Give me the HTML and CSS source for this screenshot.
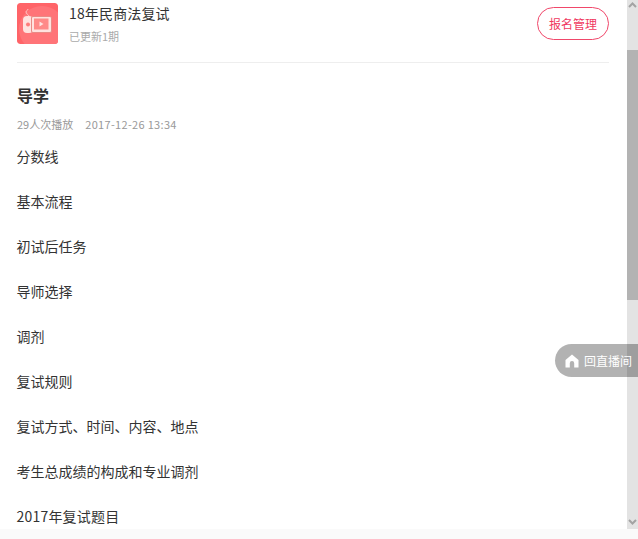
FILE: index.html
```html
<!DOCTYPE html>
<html lang="zh-CN">
<head>
<meta charset="utf-8">
<title>导学</title>
<link rel="stylesheet" href="styles.css">
</head>
<body>
<div class="window">
  <main class="content">
    <header class="course">
      <div class="cover">
        <svg viewBox="0 0 41 41" width="41" height="41" aria-hidden="true">
          <rect width="41" height="41" rx="3" fill="#ff6468"/>
          <circle cx="25" cy="26" r="23" fill="#ff7478"/>
          <path d="M12 13c-1-2-3-2-3-4s2-1 2-3" fill="none" stroke="#ffc4c2" stroke-width="1"/>
          <rect x="6" y="13" width="10" height="17" rx="4" fill="#ffe2df"/>
          <circle cx="11" cy="21.5" r="2" fill="#ff7b7b"/>
          <rect x="14.5" y="13.5" width="20" height="16" rx="1.5" fill="#ffe2df" stroke="#e98a85" stroke-width="1"/>
          <rect x="17" y="15.5" width="14.5" height="11" fill="#ff8a88"/>
          <path d="M22.5 18.5l4 2.5-4 2.5z" fill="#ffe2df"/>
        </svg>
      </div>
      <div class="course-text">
        <div class="course-name">18年民商法复试</div>
        <div class="course-sub">已更新1期</div>
      </div>
      <button class="manage">报名管理</button>
    </header>
    <hr class="divider">
    <h1 class="title">导学</h1>
    <div class="meta"><span>29人次播放</span><span class="date">2017-12-26 13:34</span></div>
    <ul class="outline">
      <li>分数线</li>
      <li>基本流程</li>
      <li>初试后任务</li>
      <li>导师选择</li>
      <li>调剂</li>
      <li>复试规则</li>
      <li>复试方式、时间、内容、地点</li>
      <li>考生总成绩的构成和专业调剂</li>
      <li class="latin-item">2017年复试题目</li>
    </ul>
  </main>
  <div class="scrollbar">
    <div class="arrow arrow-up"><svg viewBox="0 0 11 8" width="11" height="8"><path d="M2 6l3.5-3.5L9 6" fill="none" stroke="#a3a3a3" stroke-width="2"/></svg></div>
    <div class="thumb-gap"></div>
    <div class="thumb"></div>
    <div class="track-rest"></div>
    <div class="arrow arrow-down"><svg viewBox="0 0 11 8" width="11" height="8"><path d="M2 2l3.5 3.5L9 2" fill="none" stroke="#a3a3a3" stroke-width="2"/></svg></div>
  </div>
  <a class="back-live">
    <svg viewBox="0 0 14 14" width="14" height="14" aria-hidden="true"><path d="M7 .5L13.5 6v7.5H9.2V9.2a2.2 2.2 0 0 0-4.4 0v4.3H.5V6z" fill="#fff"/></svg>
    <span>回直播间</span>
  </a>
</div>
<div class="bottom-strip"></div>
</body>
</html>
```
FILE: styles.css
```css
* { box-sizing: border-box; }
html, body { margin: 0; padding: 0; height: 539px; overflow: hidden; background: #fff; }
body { font-family: "Noto Sans CJK SC", "Noto Sans", sans-serif; color: #333; }
.window { position: relative; display: flex; height: 529px; overflow: hidden; }
.content { flex: 1; min-width: 0; padding: 0 18px 0 17px; }
.course { display: flex; align-items: flex-start; height: 62px; padding-top: 3px; }
.cover { width: 41px; height: 41px; margin-right: 11px; flex: none; }
.cover svg { display: block; border-radius: 3px; }
.course-text { flex: 1; }
.course-name { font-size: 14px; line-height: 20px; color: #333; letter-spacing: .15px; }
.course-sub { font-size: 11px; line-height: 18px; color: #aaa; margin-top: 4px; }
.manage { width: 72px; height: 33px; margin-top: 4px; border: 1px solid #f0476a; border-radius: 17px; background: #fff; color: #f0385f; font: 12px/1 "Noto Sans CJK SC", sans-serif; padding: 0; }
.divider { margin: 0; border: 0; border-top: 1px solid #eee; }
.title { margin: 20px 0 0; font-size: 16px; line-height: 24px; font-weight: 700; color: #333; }
.meta { display: flex; gap: 12px; margin-top: 9px; font-size: 11px; line-height: 16px; color: #999; }
.date { letter-spacing: .32px; }
.outline { list-style: none; margin: 11px 0 0 -.5px; padding: 0; font-size: 14px; color: #333; }
.outline li { height: 45px; line-height: 27px; }
.outline .latin-item { letter-spacing: .2px; }
.scrollbar { width: 11px; flex: none; display: flex; flex-direction: column; background: #e3e3e3; }
.arrow { height: 14px; display: flex; align-items: center; justify-content: center; flex: none; }
.arrow-up { height: 10px; }
.thumb-gap { height: 40px; flex: none; }
.thumb { height: 250px; background: #b3b3b3; flex: none; }
.track-rest { flex: 1; }
.back-live { position: absolute; left: 555px; top: 344px; width: 83px; height: 33px; display: flex; align-items: center; gap: 5px; padding-left: 10px; border-radius: 17px 0 0 17px; background: rgba(0,0,0,.3); color: #fff; font-size: 12px; white-space: nowrap; }
.back-live svg { flex: none; }
.bottom-strip { height: 10px; background: #fafafa; }
```
